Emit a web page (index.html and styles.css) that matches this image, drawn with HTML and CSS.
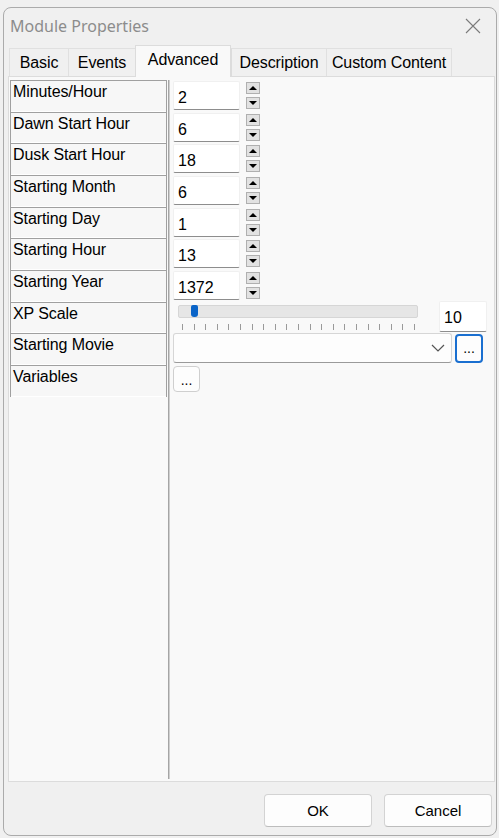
FILE: index.html
```html
<!DOCTYPE html>
<html>
<head>
<meta charset="utf-8">
<link rel="stylesheet" href="styles.css">
</head>
<body>
<div class="window">
  <div class="titlebar">
    <span class="title">Module Properties</span>
    <svg class="close" width="16" height="16" viewBox="0 0 16 16"><path d="M1 1 L15 15 M15 1 L1 15" stroke="#7a7a7a" stroke-width="1.1" fill="none"/></svg>
  </div>
  <div class="tabs">
    <div class="tab t-basic">Basic</div>
    <div class="tab t-events">Events</div>
    <div class="tab t-adv active">Advanced</div>
    <div class="tab t-desc">Description</div>
    <div class="tab t-custom">Custom Content</div>
  </div>
  <div class="panel">
    <div class="labels">
      <div class="label">Minutes/Hour</div>
      <div class="label">Dawn Start Hour</div>
      <div class="label">Dusk Start Hour</div>
      <div class="label">Starting Month</div>
      <div class="label">Starting Day</div>
      <div class="label">Starting Hour</div>
      <div class="label">Starting Year</div>
      <div class="label">XP Scale</div>
      <div class="label">Starting Movie</div>
      <div class="label">Variables</div>
    </div>
    <div class="values">
      <div class="row"><div class="num">2</div><div class="spin"><span class="up"></span><span class="down"></span></div></div>
      <div class="row"><div class="num">6</div><div class="spin"><span class="up"></span><span class="down"></span></div></div>
      <div class="row"><div class="num">18</div><div class="spin"><span class="up"></span><span class="down"></span></div></div>
      <div class="row"><div class="num">6</div><div class="spin"><span class="up"></span><span class="down"></span></div></div>
      <div class="row"><div class="num">1</div><div class="spin"><span class="up"></span><span class="down"></span></div></div>
      <div class="row"><div class="num">13</div><div class="spin"><span class="up"></span><span class="down"></span></div></div>
      <div class="row"><div class="num">1372</div><div class="spin"><span class="up"></span><span class="down"></span></div></div>
      <div class="row slider-row">
        <div class="slider">
          <div class="track"><span class="thumb"></span></div>
          <div class="ticks">
            <i></i><i></i><i></i><i></i><i></i><i></i><i></i><i></i><i></i><i></i><i></i><i></i><i></i><i></i><i></i><i></i><i></i><i></i><i></i><i></i><i></i>
          </div>
        </div>
        <div class="num scale">10</div>
      </div>
      <div class="row movie-row">
        <div class="combo">
          <svg class="chev" width="14" height="8" viewBox="0 0 14 8"><path d="M1 1 L7 7 L13 1" stroke="#555" stroke-width="1.2" fill="none"/></svg>
        </div>
        <div class="dots focus">...</div>
      </div>
      <div class="row var-row">
        <div class="dots">...</div>
      </div>
    </div>
  </div>
  <div class="footer">
    <div class="btn">OK</div>
    <div class="btn">Cancel</div>
  </div>
</div>
</body>
</html>
```

FILE: styles.css
```css
html, body {
  margin: 0;
  padding: 0;
  background: #f0f0f0;
}
body {
  width: 499px;
  height: 838px;
  overflow: hidden;
  font-family: "Liberation Sans", Arial, sans-serif;
  font-size: 16px;
  color: #000;
}
.window {
  margin: 7px 0 0 3px;
  width: 494px;
  height: 829px;
  box-sizing: border-box;
  border: 1px solid #ababab;
  border-radius: 8px;
  background: #f0f0f0;
  display: flex;
  flex-direction: column;
}
.titlebar {
  height: 37px;
  display: flex;
  align-items: center;
  justify-content: space-between;
  padding: 0 15px 0 6px;
}
.title {
  font-family: "Noto Sans", "Open Sans", sans-serif;
  font-size: 16px;
  color: #8c8c8c;
  margin-top: -2px;
}
.close {
  margin-top: -1px;
}
.tabs {
  display: flex;
  align-items: flex-end;
  height: 32px;
  padding-left: 5px;
  margin-bottom: -1px;
  position: relative;
  z-index: 1;
}
.tab {
  height: 28px;
  box-sizing: border-box;
  border: 1px solid #e0e0e0;
  border-bottom: none;
  border-right: none;
  background: #f0f0f0;
  text-align: center;
  line-height: 28px;
  color: #000;
  margin-bottom: 1px;
  letter-spacing: -0.1px;
}
.t-basic { width: 59px; }
.t-events { width: 67px; }
.t-adv { width: 96px; }
.t-desc { width: 95px; border-left: 1px solid #dcdcdc; }
.t-custom { width: 126px; border-right: 1px solid #e0e0e0; }
.tab.active {
  height: 32px;
  line-height: 28px;
  background: #f9f9f9;
  border: 1px solid #dcdcdc;
  border-bottom: none;
  margin-bottom: 0;
}
.panel {
  margin-left: 4px;
  width: 487px;
  height: 706px;
  box-sizing: border-box;
  border: 1px solid #dcdcdc;
  background: #f9f9f9;
  display: flex;
  align-items: flex-start;
}
.labels {
  width: 158px;
  height: 699px;
  margin-top: 3px;
  border-right: 1px solid #a5a5a5;
  box-shadow: 1px 0 0 #cfcfcf;
  padding-left: 1px;
}
.label {
  width: 157px;
  height: 31.67px;
  box-sizing: border-box;
  border-top: 1px solid #a0a0a0;
  border-left: 1px solid #a0a0a0;
  border-right: 1px solid #a0a0a0;
  box-shadow: inset 0 -1px 0 #ffffff;
  background: #f7f7f7;
  padding: 2px 0 0 2px;
  line-height: 18px;
  white-space: nowrap;
  letter-spacing: -0.1px;
}
.values {
  margin-top: 3px;
  padding-left: 4px;
  flex: 1;
}
.row {
  height: 31.67px;
  display: flex;
  align-items: flex-start;
  position: relative;
}
.num {
  width: 67px;
  height: 29px;
  margin-top: 1px;
  box-sizing: border-box;
  background: #ffffff;
  border: 1px solid #f0f0f0;
  border-bottom: 1px solid #8d8d8d;
  border-radius: 2px;
  padding: 7px 0 0 4px;
  line-height: 18px;
}
.spin {
  margin-left: 6px;
  margin-top: 2px;
  display: flex;
  flex-direction: column;
  gap: 3px;
}
.spin span {
  display: block;
  width: 14px;
  height: 12px;
  box-sizing: border-box;
  border: 1px solid #b0b0b0;
  background: #e2e2e2;
  position: relative;
}
.spin span::after {
  content: "";
  position: absolute;
  left: 2px;
  width: 0;
  height: 0;
  border-left: 4px solid transparent;
  border-right: 4px solid transparent;
}
.spin .up::after {
  top: 3px;
  border-bottom: 4px solid #000;
}
.spin .down::after {
  top: 3px;
  border-top: 4px solid #000;
}
.slider-row {
  justify-content: space-between;
  padding-right: 7px;
}
.slider {
  margin-left: 5px;
  margin-top: 3px;
  width: 240px;
}
.track {
  height: 13px;
  box-sizing: border-box;
  background: #e6e6e6;
  border: 1px solid #d6d6d6;
  border-radius: 2px;
  position: relative;
}
.thumb {
  position: absolute;
  left: 12px;
  top: -1px;
  width: 7px;
  height: 12px;
  background: #0a64c8;
  border-radius: 2px 2px 3px 3px;
}
.ticks {
  display: flex;
  justify-content: space-between;
  padding: 6px 3px 0 4px;
}
.ticks i {
  display: block;
  width: 1px;
  height: 6px;
  background: #9a9a9a;
}
.scale {
  width: 48px;
  height: 31px;
  margin-top: -1px;
  padding-top: 7px;
}
.movie-row {
  gap: 3px;
}
.combo {
  width: 279px;
  height: 30px;
  box-sizing: border-box;
  background: #fdfdfd;
  border: 1px solid #d6d6d6;
  border-bottom: 1px solid #9a9a9a;
  border-radius: 3px;
  display: flex;
  align-items: center;
  justify-content: flex-end;
  padding-right: 6px;
}
.dots {
  width: 27px;
  height: 27px;
  box-sizing: border-box;
  background: #fdfdfd;
  border: 1px solid #cfcfcf;
  border-radius: 4px;
  text-align: center;
  font-size: 14px;
  line-height: 26px;
  margin-top: 1px;
}
.dots.focus {
  width: 28px;
  height: 29px;
  border: 2px solid #1a6fd0;
  line-height: 24px;
}
.var-row .dots {
  margin-top: 1px;
  height: 26px;
}
.footer {
  display: flex;
  justify-content: flex-end;
  gap: 12px;
  padding: 12px 4px 0 0;
}
.btn {
  width: 108px;
  height: 33px;
  box-sizing: border-box;
  background: #fdfdfd;
  border: 1px solid #d3d3d3;
  border-bottom-color: #bdbdbd;
  border-radius: 4px;
  text-align: center;
  line-height: 31px;
  font-size: 15px;
}
```
